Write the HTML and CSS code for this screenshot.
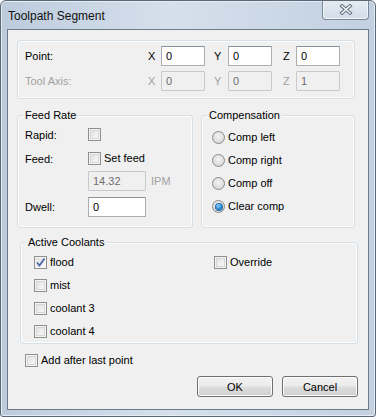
FILE: index.html
```html
<!DOCTYPE html>
<html lang="en">
<head>
    <meta charset="UTF-8">
    <title>Toolpath Segment</title>
    <link rel="stylesheet" href="styles.css">
</head>
<body>
    <div class="window">
        <div class="titlebar">
            <span class="title">Toolpath Segment</span>
            <div class="close">
                <svg width="14" height="11" viewBox="0 0 14 11">
                    <path d="M3 2 L11 9 M11 2 L3 9" stroke="#65717e" stroke-width="3.6" stroke-linecap="square" fill="none"/>
                    <path d="M3 2 L11 9 M11 2 L3 9" stroke="#eef1f4" stroke-width="1.6" stroke-linecap="square" fill="none"/>
                </svg>
            </div>
        </div>
        <div class="client">
            <div class="group point-group">
                <div class="axis-row">
                    <span class="row-label">Point:</span>
                    <span class="axis">X</span><input class="field axis-field" value="0">
                    <span class="axis axis-y">Y</span><input class="field axis-field" value="0">
                    <span class="axis axis-z">Z</span><input class="field axis-field" value="0">
                </div>
                <div class="axis-row disabled">
                    <span class="row-label">Tool Axis:</span>
                    <span class="axis">X</span><input class="field axis-field" value="0" disabled>
                    <span class="axis axis-y">Y</span><input class="field axis-field" value="0" disabled>
                    <span class="axis axis-z">Z</span><input class="field axis-field" value="1" disabled>
                </div>
            </div>

            <div class="middle">
                <div class="group feed-group">
                    <span class="legend">Feed Rate</span>
                    <div class="feed-row">
                        <span class="feed-label">Rapid:</span>
                        <span class="box"></span>
                    </div>
                    <div class="feed-row feed-set">
                        <span class="feed-label">Feed:</span>
                        <span class="box"></span>
                        <span class="check-text">Set feed</span>
                    </div>
                    <div class="feed-row feed-value">
                        <span class="feed-label"></span>
                        <input class="field feed-field" value="14.32" disabled>
                        <span class="unit">IPM</span>
                    </div>
                    <div class="feed-row feed-dwell">
                        <span class="feed-label">Dwell:</span>
                        <input class="field feed-field" value="0">
                    </div>
                </div>
                <div class="group comp-group">
                    <span class="legend">Compensation</span>
                    <div class="radio-row"><span class="radio"></span><span class="check-text">Comp left</span></div>
                    <div class="radio-row"><span class="radio"></span><span class="check-text">Comp right</span></div>
                    <div class="radio-row"><span class="radio"></span><span class="check-text">Comp off</span></div>
                    <div class="radio-row"><span class="radio on"></span><span class="check-text">Clear comp</span></div>
                </div>
            </div>

            <div class="group coolant-group">
                <span class="legend">Active Coolants</span>
                <div class="coolant-grid">
                    <div class="check-row">
                        <span class="box checked">
                            <svg width="11" height="11" viewBox="0 0 11 11"><path d="M2 5.5 L4.5 8.5 L9.5 1.5" stroke="#4a67a8" stroke-width="1.8" fill="none"/></svg>
                        </span>
                        <span class="check-text">flood</span>
                    </div>
                    <div class="check-row"><span class="box"></span><span class="check-text">Override</span></div>
                    <div class="check-row"><span class="box"></span><span class="check-text">mist</span></div>
                    <div></div>
                    <div class="check-row"><span class="box"></span><span class="check-text">coolant 3</span></div>
                    <div></div>
                    <div class="check-row"><span class="box"></span><span class="check-text">coolant 4</span></div>
                </div>
            </div>

            <div class="check-row add-after"><span class="box"></span><span class="check-text">Add after last point</span></div>

            <div class="buttons">
                <button class="btn">OK</button>
                <button class="btn">Cancel</button>
            </div>
        </div>
    </div>
</body>
</html>
```

FILE: styles.css
```css
* {
    box-sizing: border-box;
}
body {
    margin: 0;
    background: #ffffff;
    font-family: "Liberation Sans", Arial, sans-serif;
    font-size: 11px;
    color: #000;
}
.window {
    width: 376px;
    height: 417px;
    border: 1px solid #5c6876;
    border-radius: 6px 6px 3px 3px;
    background: linear-gradient(to right, #bccbdc 0%, #d5e0ec 45%, #c2d0e0 100%);
    box-shadow: inset 0 0 0 1px #e4ecf4;
    display: flex;
    flex-direction: column;
    overflow: hidden;
}
.titlebar {
    height: 28px;
    display: flex;
    align-items: flex-start;
    padding-left: 7px;
}
.title {
    margin-top: 7px;
    line-height: 16px;
    font-size: 12px;
    color: #101010;
}
.close {
    margin-left: auto;
    margin-right: 6px;
    margin-top: -1px;
    width: 47px;
    height: 20px;
    border: 1px solid #7a8796;
    border-top: none;
    border-radius: 0 0 4px 4px;
    background: linear-gradient(#e6ecf2, #d3dde8);
    box-shadow: inset 0 0 0 1px #f1f5f9;
    display: flex;
    align-items: center;
    justify-content: center;
}
.client {
    flex: 1;
    margin: 0 6px 6px;
    border: 1px solid #6d7a88;
    background: #f0f0f0;
    padding: 10px 13px 0 9px;
}
.group {
    position: relative;
    border: 1px solid #d5dfe5;
    border-radius: 3px;
    box-shadow: inset 0 0 0 1px #fafbfc;
}
.legend {
    position: absolute;
    top: -8px;
    left: 5px;
    padding: 0 2px;
    line-height: 15px;
    background: #f0f0f0;
}
.point-group {
    height: 59px;
    padding: 5px 0 0 7px;
}
.axis-row {
    display: flex;
    align-items: center;
    height: 20px;
    margin-bottom: 5px;
}
.row-label {
    width: 123px;
}
.axis {
    width: 13px;
}
.axis-y {
    width: 14px;
    margin-left: 9px;
}
.axis-z {
    width: 13px;
    margin-left: 11px;
}
.disabled {
    color: #a0a0a0;
}
.field {
    height: 20px;
    margin: 0;
    padding: 0 4px;
    border: 1px solid #abadb3;
    border-top-color: #8e9198;
    border-radius: 1px;
    background: #ffffff;
    font-family: inherit;
    font-size: 11px;
    color: #000;
    -webkit-appearance: none;
    outline: none;
}
.field:disabled {
    background: #f0f0f0;
    border-color: #c7c9cc;
    color: #6d6d6d;
}
.axis-field {
    width: 44px;
}
.middle {
    display: flex;
    gap: 8px;
    margin-top: 16px;
    height: 113px;
}
.feed-group {
    width: 176px;
    padding: 10px 0 0 7px;
}
.feed-row {
    display: flex;
    align-items: center;
    height: 17px;
}
.feed-set {
    margin-top: 7px;
}
.feed-value {
    margin-top: 4px;
    height: 20px;
}
.feed-dwell {
    margin-top: 6px;
    height: 20px;
}
.feed-label {
    width: 63px;
}
.feed-field {
    width: 58px;
}
.unit {
    margin-left: 5px;
    color: #a0a0a0;
}
.comp-group {
    flex: 1;
    padding: 13px 0 0 10px;
}
.radio-row {
    display: flex;
    align-items: center;
    height: 17px;
    margin-bottom: 6px;
}
.radio {
    width: 13px;
    height: 13px;
    border-radius: 50%;
    border: 1px solid #8c8c8c;
    background: radial-gradient(circle at 50% 40%, #f4f4f4 0%, #dedede 60%, #cfcfcf 100%);
    margin-right: 3px;
    display: flex;
    align-items: center;
    justify-content: center;
}
.radio.on::after {
    content: "";
    width: 6px;
    height: 6px;
    border-radius: 50%;
    background: radial-gradient(circle at 40% 35%, #9ad6ff 0%, #2186d8 55%, #0d4f8f 100%);
    box-shadow: 0 0 0 1px #2a6aa8;
}
.check-text {
    line-height: 17px;
}
.box {
    width: 13px;
    height: 13px;
    border: 1px solid #8e8f8f;
    background: linear-gradient(135deg, #dcdcdc 0%, #f0f0f0 60%, #fbfbfb 100%);
    box-shadow: inset 0 0 0 1px #f4f4f4, inset 0 0 0 2px #d6d6d6;
    margin-right: 3px;
    display: flex;
    align-items: center;
    justify-content: center;
}
.box.checked {
    box-shadow: inset 0 0 0 1px #f4f4f4;
}
.coolant-group {
    margin: 14px -3px 0 3px;
    height: 102px;
    padding: 11px 0 0 13px;
}
.coolant-grid {
    display: grid;
    grid-template-columns: 180px 1fr;
    row-gap: 6px;
}
.check-row {
    display: flex;
    align-items: center;
    height: 17px;
}
.add-after {
    margin: 8px 0 0 8px;
}
.buttons {
    display: flex;
    justify-content: flex-end;
    gap: 9px;
    margin: 7px -3px 0 0;
}
.btn {
    width: 76px;
    height: 21px;
    padding: 0;
    border: 1px solid #707070;
    border-radius: 3px;
    background: linear-gradient(#f2f2f2 0%, #ebebeb 48%, #dddddd 52%, #cfcfcf 100%);
    box-shadow: inset 0 0 0 1px #fcfcfc;
    font-family: inherit;
    font-size: 11px;
    color: #000;
}
```
